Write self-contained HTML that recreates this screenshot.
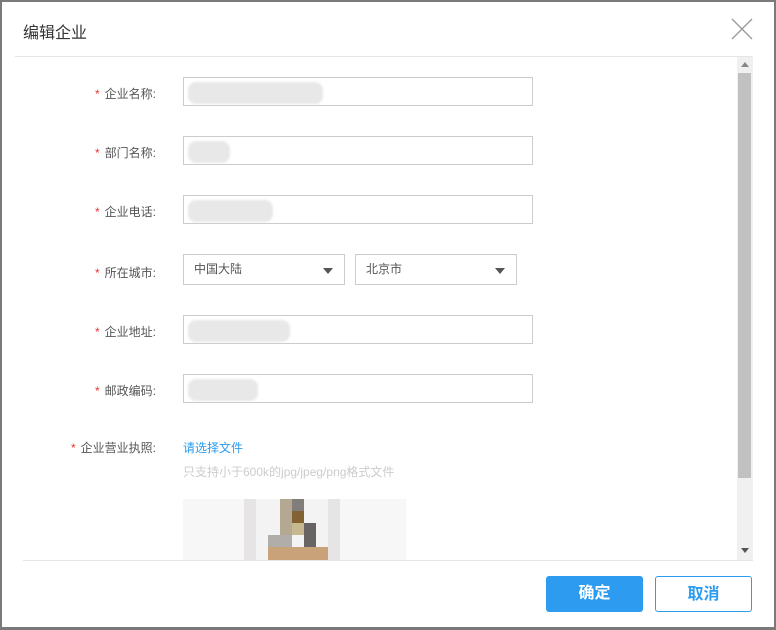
<!DOCTYPE html>
<html><head><meta charset="utf-8"><style>
body{margin:0;width:776px;height:630px;background:#7a7a7a;font-family:"Liberation Sans","Noto Sans CJK SC",sans-serif;overflow:hidden;position:relative}
.m{position:absolute;left:2px;top:2px;width:772px;height:625px;background:#fff}
.abs{position:absolute}
.lab{position:absolute;right:620px;font-size:12px;color:#555;white-space:nowrap}
.lab b{color:#e33;font-weight:normal;margin-right:5px}
.in{position:absolute;left:183px;width:348px;height:27px;border:1px solid #ccc;background:#fff}
.blur{position:absolute;background:#e8e8e8;border-radius:8px;filter:blur(1px)}
.sel{position:absolute;top:254px;height:29px;border:1px solid #ccc;font-size:12px;color:#555;line-height:29px;padding-left:10px;box-sizing:border-box;height:31px}
.sel:after{content:"";position:absolute;right:11px;top:13px;border:5px solid transparent;border-top:6px solid #555}
.btn{position:absolute;top:576px;width:97px;height:36px;border-radius:3px;font-size:16px;font-weight:bold;text-align:center;line-height:36px;box-sizing:border-box}
</style></head><body>
<div class="m"></div>
<div class="abs" style="left:23px;top:19px;font-size:16px;color:#333">编辑企业</div>
<svg class="abs" style="left:731px;top:18px" width="22" height="22"><path d="M1 1L21 21M21 1L1 21" stroke="#999" stroke-width="1.3"/></svg>
<div class="abs" style="left:15px;top:56px;width:738px;height:1px;background:#e5e5e5"></div>
<div class="abs" style="left:23px;top:560px;width:730px;height:1px;background:#e5e5e5"></div>
<div class="abs" style="left:737px;top:57px;width:16px;height:503px;background:#f0f0f0"></div>
<div class="abs" style="left:738px;top:73px;width:13px;height:405px;background:#c1c1c1"></div>
<div class="abs" style="left:741px;top:62px;border:4px solid transparent;border-bottom:5px solid #888;border-top:0"></div>
<div class="abs" style="left:741px;top:548px;border:4px solid transparent;border-top:5px solid #555;border-bottom:0"></div>

<div class="lab" style="top:85px"><b>*</b>企业名称:</div>
<div class="in" style="top:77px"></div><div class="blur" style="left:188px;top:82px;width:135px;height:22px"></div>
<div class="lab" style="top:144px"><b>*</b>部门名称:</div>
<div class="in" style="top:136px"></div><div class="blur" style="left:188px;top:141px;width:42px;height:22px"></div>
<div class="lab" style="top:203px"><b>*</b>企业电话:</div>
<div class="in" style="top:195px"></div><div class="blur" style="left:188px;top:200px;width:85px;height:22px"></div>
<div class="lab" style="top:264px"><b>*</b>所在城市:</div>
<div class="sel" style="left:183px;width:162px">中国大陆</div>
<div class="sel" style="left:355px;width:162px">北京市</div>
<div class="lab" style="top:323px"><b>*</b>企业地址:</div>
<div class="in" style="top:315px"></div><div class="blur" style="left:188px;top:320px;width:102px;height:22px"></div>
<div class="lab" style="top:382px"><b>*</b>邮政编码:</div>
<div class="in" style="top:374px"></div><div class="blur" style="left:188px;top:379px;width:70px;height:22px"></div>
<div class="lab" style="top:439px"><b>*</b>企业营业执照:</div>
<div class="abs" style="left:183px;top:439px;font-size:12px;color:#2a9bef">请选择文件</div>
<div class="abs" style="left:183px;top:463px;font-size:12px;color:#ccc">只支持小于600k的jpg/jpeg/png格式文件</div>
<div class="abs" style="left:183px;top:499px;width:223px;height:61px;background:#f7f7f7"></div>
<div class="abs" style="left:244px;top:499px;width:96px;height:61px;background:#e6e4e4"></div>
<div class="abs" style="left:256px;top:499px;width:72px;height:61px;background:#f3f3f3"></div>
<div class="abs" style="left:280px;top:499px;width:12px;height:61px;background:#b5a893"></div>
<div class="abs" style="left:292px;top:499px;width:12px;height:12px;background:#817d7b"></div>
<div class="abs" style="left:292px;top:511px;width:12px;height:12px;background:#826233"></div>
<div class="abs" style="left:292px;top:523px;width:12px;height:12px;background:#c8b890"></div>
<div class="abs" style="left:304px;top:523px;width:12px;height:24px;background:#686463"></div>
<div class="abs" style="left:268px;top:535px;width:24px;height:12px;background:#b0adaa"></div>
<div class="abs" style="left:268px;top:547px;width:60px;height:13px;background:#c9a27a"></div>
<div class="btn" style="left:546px;background:#2d9cf0;color:#fff">确定</div>
<div class="btn" style="left:655px;border:1px solid #2d9cf0;color:#2d9cf0;background:#fff">取消</div>
</body></html>
